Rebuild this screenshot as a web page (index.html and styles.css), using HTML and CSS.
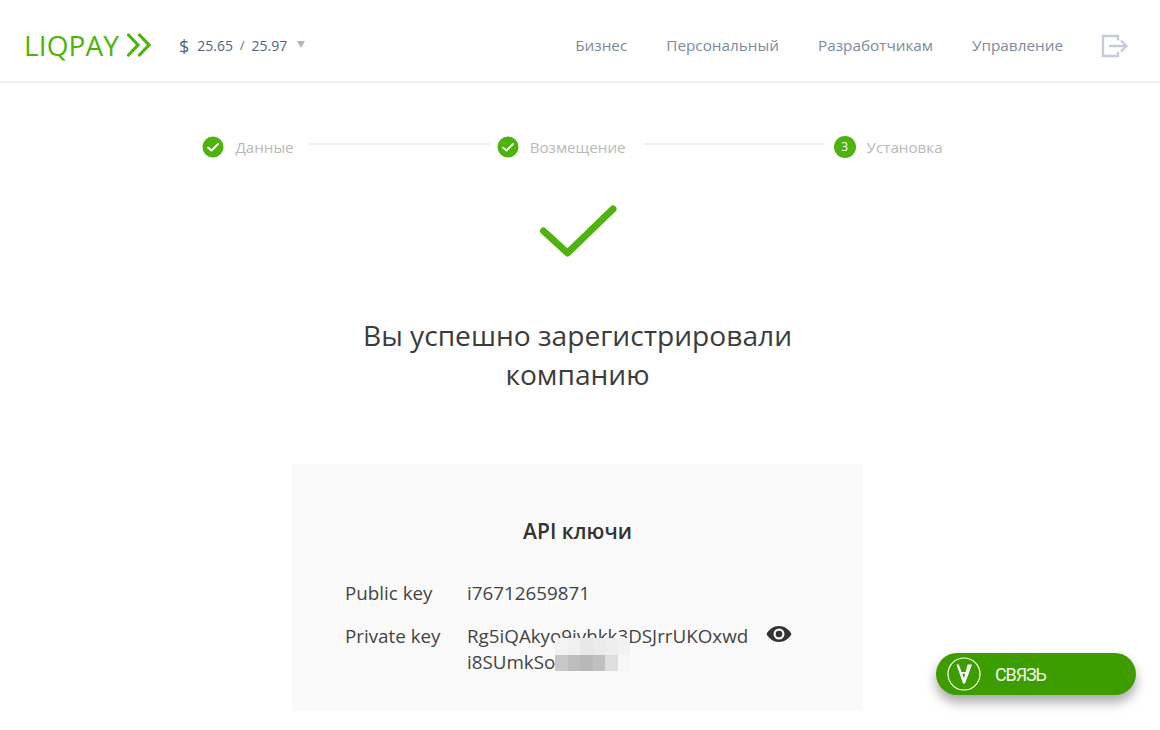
FILE: index.html
```html
<!DOCTYPE html>
<html lang="ru">
<head>
<meta charset="utf-8">
<title>LiqPay</title>
<link rel="stylesheet" href="styles.css">
</head>
<body>
<header class="topbar">
  <div class="brand">
    <span class="logo-text">LIQPAY</span>
    <svg class="logo-arrows" width="24" height="24" viewBox="0 0 24 24"><path d="M1.500 2l9.500 10-9.500 10M12.500 2L22 12l-9.500 10" fill="none" stroke="#4fb30d" stroke-width="3.200" stroke-linecap="round" stroke-linejoin="miter"/></svg>
  </div>
  <div class="rates">
    <span class="currency">$</span><span>25.65</span><span class="slash">/</span><span>25.97</span><span class="caret"></span>
  </div>
  <nav class="nav">
    <a>Бизнес</a><a>Персональный</a><a>Разработчикам</a><a>Управление</a>
  </nav>
  <svg class="logout" width="28" height="24" viewBox="0 0 28 24"><path d="M17 6.500V2H2v20h15v-4.500" fill="none" stroke="#c3ccd8" stroke-width="2.400"/><path d="M8 12h17M20 6.500l5.500 5.500-5.500 5.500" fill="none" stroke="#c3ccd8" stroke-width="2.400"/></svg>
</header>
<main class="main">
  <ol class="steps">
    <li class="step">
      <svg class="dot" width="22" height="22" viewBox="0 0 22 22"><circle cx="11" cy="11" r="10.500" fill="#4fb30d"/><path d="M6 11.500l3.500 3 6.500-6.500" fill="none" stroke="#fff" stroke-width="1.800" stroke-linecap="round" stroke-linejoin="round"/></svg>
      <span>Данные</span>
    </li>
    <li class="line line-first"></li>
    <li class="step">
      <svg class="dot" width="22" height="22" viewBox="0 0 22 22"><circle cx="11" cy="11" r="10.500" fill="#4fb30d"/><path d="M6 11.500l3.500 3 6.500-6.500" fill="none" stroke="#fff" stroke-width="1.800" stroke-linecap="round" stroke-linejoin="round"/></svg>
      <span>Возмещение</span>
    </li>
    <li class="line line-second"></li>
    <li class="step">
      <b class="dot num">3</b>
      <span>Установка</span>
    </li>
  </ol>
  <svg class="big-check" width="80" height="56" viewBox="0 0 80 56"><path d="M4.500 26l24 22L74 4" fill="none" stroke="#4fb30d" stroke-width="7" stroke-linecap="round" stroke-linejoin="round"/></svg>
  <h1 class="title">Вы успешно зарегистрировали<br>компанию</h1>
  <section class="card">
    <h2 class="card-title">API ключи</h2>
    <div class="row">
      <div class="label">Public key</div>
      <div class="value">i76712659871</div>
    </div>
    <div class="row">
      <div class="label">Private key</div>
      <div class="value private">Rg5iQAkyo9ivhkk3DSJrrUKOxwd<br>i8SUmkSo
        <div class="blur">
          <i class="c1"></i><i class="c2"></i><i class="c3"></i><i class="c4"></i><i class="c5"></i><i class="c6"></i>
          <i class="d1"></i><i class="d2"></i><i class="d3"></i><i class="d4"></i><i class="d5"></i><i class="d6"></i>
        </div>
      </div>
      <svg class="eye" width="26" height="18" viewBox="0 0 26 18"><path fill-rule="evenodd" d="M13 1C7.500 1 3 4.300.500 9 3 13.700 7.500 17 13 17s10-3.300 12.500-8C23 4.300 18.500 1 13 1zm0 13.500a5.500 5.500 0 1 1 0-11 5.500 5.500 0 0 1 0 11z" fill="#333"/><circle cx="13" cy="9" r="3.300" fill="#333"/></svg>
    </div>
  </section>
</main>
<button class="chat">
  <svg class="chat-icon" width="34" height="34" viewBox="0 0 34 34"><circle cx="17" cy="17" r="16" fill="none" stroke="#fff" stroke-width="1.200"/><path d="M9.500 7.500h2.300L17 21.500l3.600-14H25L18 26.500h-2zM13 15h9v1.700h-9z" fill="#fff"/></svg>
  <span class="chat-label">СВЯЗЬ</span>
</button>
</body>
</html>
```
FILE: styles.css
```css
* { box-sizing: border-box; }
html, body { margin: 0; height: 100%; overflow: hidden; }
body { background: #fff; font-family: "Open Sans", "Noto Sans", sans-serif; color: #333; }

.topbar {
  height: 82px;
  display: flex;
  align-items: center;
  padding: 8px 31px 0 24px;
  border-bottom: 1px solid #eee;
  box-shadow: 0 1px 2px rgba(0,0,0,.08);
}
.brand { display: flex; align-items: center; gap: 8px; }
.logo-text { font-size: 28px; line-height: 36px; color: #4fb30d; font-weight: 400; letter-spacing: .1px; }
.rates { display: flex; align-items: center; margin: 2px 0 0 28px; font-size: 14px; color: #54637a; }
.currency { font-size: 18px; margin-right: 8px; }
.slash { margin: 0 7px; font-size: 12px; }
.caret { width: 0; height: 0; margin: -2px 0 0 10px; border: 4.500px solid transparent; border-top: 7px solid #b5b5b5; border-bottom: 0; }
.nav { display: flex; gap: 39px; margin-left: auto; font-size: 15.300px; color: #7b8a9e; }
.logout { margin: 2px 0 0 38px; }

.main { display: flex; flex-direction: column; align-items: center; width: 1155px; }
.steps { list-style: none; display: flex; align-items: center; margin: 53px 0 0 -10px; padding: 0; font-size: 15.200px; color: #b9b9b9; }
.step { display: flex; align-items: center; gap: 11px; line-height: 24px; }
.dot { display: block; flex: none; }
.num { width: 22px; height: 22px; border-radius: 50%; background: #4fb30d; color: #fff; font-size: 12px; font-weight: 400; line-height: 22px; text-align: center; }
.line { width: 181px; height: 2px; background: #f0f0f0; }
.line-first { margin: -7px 7px 0 15px; }
.line-second { margin: -7px 9px 0 18px; }
.big-check { display: block; margin: 46px 0 0 3px; }
.title { margin: 55px 0 0; font-size: 28.150px; line-height: 39px; font-weight: 400; text-align: center; color: #3c3c3c; }
.card { width: 571px; height: 247px; margin-top: 70px; padding: 51px 53px 0; background: #fafafa; }
.card-title { margin: 0 0 32px; font-size: 21px; line-height: 32px; font-weight: 600; text-align: center; color: #333; }
.row { display: flex; align-items: flex-start; margin-bottom: 15px; font-size: 18.800px; line-height: 28px; color: #444; }
.label { width: 122px; flex: none; }
.value { position: relative; white-space: nowrap; }
.private { padding-top: 1px; line-height: 26px; }
.eye { margin: 3px 0 0 18px; flex: none; }
.blur { position: absolute; left: 88px; top: 16px; width: 75px; height: 33px; display: grid; grid-template-columns: repeat(6, 1fr); grid-template-rows: 17px 16px; }
.c1 { background: #f3f3f3; } .c2 { background: #f0f0f0; } .c3 { background: #e8e8e8; } .c4 { background: #ebebeb; } .c5 { background: #eeeeee; } .c6 { background: #f2f2f2; }
.d1 { background: #c8c8c8; } .d2 { background: #bdbdbd; } .d3 { background: #b8b8b8; } .d4 { background: #c0c0c0; } .d5 { background: #dedede; } .d6 { background: #f7f7f7; }

.chat {
  position: absolute;
  left: 936px;
  top: 653px;
  width: 200px;
  height: 42px;
  display: flex;
  align-items: center;
  gap: 14px;
  padding: 0 11px;
  border: 0;
  border-radius: 21px;
  background: #3d9c00;
  color: #eef7e6;
  font-family: Roboto, sans-serif;
  font-size: 18px;
  font-weight: 400;
  box-shadow: 0 7px 12px rgba(0,0,0,.35);
}
.chat-label { letter-spacing: -1.100px; }
.chat-icon { display: block; flex: none; }
```
